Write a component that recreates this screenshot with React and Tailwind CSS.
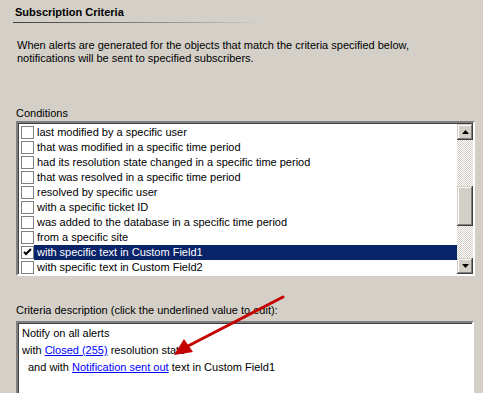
import React from "react";

const CONDITIONS = [
  "last modified by a specific user",
  "that was modified in a specific time period",
  "had its resolution state changed in a specific time period",
  "that was resolved in a specific time period",
  "resolved by specific user",
  "with a specific ticket ID",
  "was added to the database in a specific time period",
  "from a specific site",
  "with specific text in Custom Field1",
  "with specific text in Custom Field2",
];

const raised =
  "bg-[#d4d0c8] shadow-[inset_-1px_-1px_#404040,inset_1px_1px_#d4d0c8,inset_-2px_-2px_#808080,inset_2px_2px_#fff]";
const sunken = "border-2 border-t-[#808080] border-l-[#808080] border-r-white border-b-white";

const Check = ({ on }) => (
  <span className="flex h-[13px] w-[13px] shrink-0 items-center justify-center border border-[#808080] bg-white">
    {on && (
      <svg width="9" height="9" viewBox="0 0 9 9">
        <path d="M1 4 L3 6 L8 1" stroke="#000" strokeWidth="2" fill="none" />
      </svg>
    )}
  </span>
);

const Tri = ({ up }) => (
  <svg width="7" height="4" viewBox="0 0 7 4">
    <path d={up ? "M0 4 L3.5 0 L7 4 Z" : "M0 0 L3.5 4 L7 0 Z"} fill="#000" />
  </svg>
);

export default function App() {
  return (
    <div className="relative h-[393px] w-[483px] overflow-hidden bg-[#d4d0c8] text-[11px] leading-[13px] text-black font-['Liberation_Sans',Arial,sans-serif]">
      <div className="pl-[15px] pt-[6px] font-bold">Subscription Criteria</div>
      <div className="ml-[13px] mt-[3px] h-px w-[250px] bg-gradient-to-r from-[#404040] via-[#808080] to-[#d4d0c8]" />

      <div className="mt-[16px] pl-[17px]">
        When alerts are generated for the objects that match the criteria specified below,
        <br />
        notifications will be sent to specified subscribers.
      </div>

      <div className="mt-[42px] pl-[16px]">Conditions</div>

      <div className={`ml-[16px] mt-[1px] flex h-[155px] w-[459px] ${sunken}`}>
        <div className="flex-1 overflow-hidden border-t border-l border-[#404040] bg-white pt-[1px]">
          {CONDITIONS.map((c, i) => {
            const sel = i === 8;
            return (
              <div key={c} className="flex h-[15px] items-center pl-[2px]">
                <Check on={sel} />
                <span
                  className={`flex h-[15px] flex-1 items-center whitespace-nowrap pl-[3px] ${
                    sel ? "bg-[#0a246a] text-white" : ""
                  }`}
                >
                  {c}
                </span>
              </div>
            );
          })}
        </div>
        <div className="flex w-[16px] flex-col border-t border-[#404040] bg-[repeating-conic-gradient(#d4d0c8_0_25%,#fff_0_50%)] bg-[length:2px_2px]">
          <div className={`flex h-[16px] items-center justify-center ${raised}`}>
            <Tri up />
          </div>
          <div className="h-[46px]" />
          <div className={`h-[40px] ${raised}`} />
          <div className="flex-1" />
          <div className={`flex h-[16px] items-center justify-center ${raised}`}>
            <Tri />
          </div>
        </div>
      </div>

      <div className="mt-[28px] pl-[16px]">Criteria description (click the underlined value to edit):</div>

      <div className={`ml-[16px] mt-[4px] h-[80px] w-[458px] ${sunken}`}>
        <div className="h-full border-t border-l border-[#404040] bg-white pl-[3px] pt-px leading-[17px]">
          <div>Notify on all alerts</div>
          <div>
            with <span className="text-[#0000ff] underline">Closed (255)</span> resolution state
          </div>
          <div className="pl-[6px]">
            and with <span className="text-[#0000ff] underline">Notification sent out</span> text in Custom Field1
          </div>
        </div>
      </div>

      <svg className="absolute left-0 top-0" width="483" height="393" viewBox="0 0 483 393">
        <line x1="283" y1="297" x2="188" y2="346" stroke="#c40000" strokeWidth="3" strokeLinecap="round" />
        <path d="M174 355 L184 339 L193 352 Z" fill="#c40000" />
      </svg>
    </div>
  );
}
